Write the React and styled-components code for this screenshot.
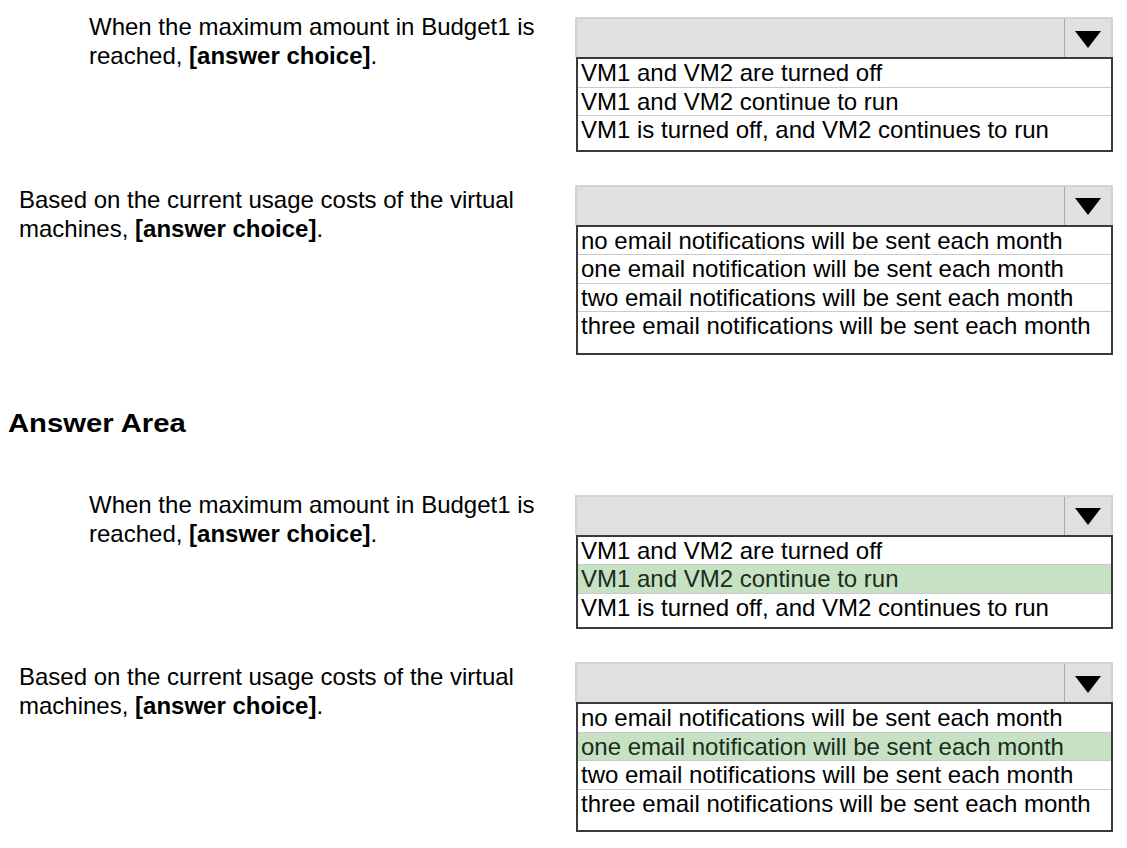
import styled, { createGlobalStyle } from "styled-components";

const GlobalStyle = createGlobalStyle`
  html, body {
    margin: 0;
    padding: 0;
    background: #fff;
  }
  body {
    font-family: "Liberation Sans", Arial, sans-serif;
    color: #000;
    overflow: hidden;
  }
`;

const questions = [
  {
    text: "When the maximum amount in Budget1 is reached, ",
    indent: 89,
    offset: 5,
    extra: 5,
    options: [
      "VM1 and VM2 are turned off",
      "VM1 and VM2 continue to run",
      "VM1 is turned off, and VM2 continues to run",
    ],
  },
  {
    text: "Based on the current usage costs of the virtual machines, ",
    indent: 19,
    offset: 0,
    extra: 12,
    options: [
      "no email notifications will be sent each month",
      "one email notification will be sent each month",
      "two email notifications will be sent each month",
      "three email notifications will be sent each month",
    ],
  },
];

const answers = [1, 1];

export default function App() {
  return (
    <Page>
      <GlobalStyle />
      <Section>
        {questions.map((q, i) => (
          <Question key={i} q={q} />
        ))}
      </Section>
      <Heading>Answer Area</Heading>
      <Section $answer>
        {questions.map((q, i) => (
          <Question key={i} q={q} selected={answers[i]} />
        ))}
      </Section>
    </Page>
  );
}

function Question({ q, selected }) {
  return (
    <Row>
      <Prompt $indent={q.indent}>
        {q.text}
        <b>[answer choice]</b>.
      </Prompt>
      <Dropdown $offset={q.offset}>
        <Header>
          <HeaderField />
          <ArrowCell>
            <svg width="26" height="17" viewBox="0 0 26 17">
              <polygon points="0,0 26,0 13,17" fill="#000" />
            </svg>
          </ArrowCell>
        </Header>
        <List $extra={q.extra}>
          {q.options.map((o, j) => (
            <Option key={j} $picked={selected === j}>
              {o}
            </Option>
          ))}
        </List>
      </Dropdown>
    </Row>
  );
}

const Page = styled.div`
  width: 1127px;
  padding-top: 12px;
  box-sizing: border-box;
  display: flex;
  flex-direction: column;
  align-items: flex-start;
`;

const Section = styled.div`
  display: flex;
  flex-direction: column;
  gap: 33px;
  margin-top: ${(p) => (p.$answer ? "52px" : "0")};
`;

const Row = styled.div`
  display: grid;
  grid-template-columns: 575px 538px;
  align-items: start;
`;

const Prompt = styled.div`
  padding-left: ${(p) => p.$indent}px;
  font-size: 24px;
  line-height: 29px;
  b {
    font-weight: bold;
  }
`;

const Dropdown = styled.div`
  margin-top: ${(p) => p.$offset}px;
  display: flex;
  flex-direction: column;
`;

const Header = styled.div`
  height: 40px;
  box-sizing: border-box;
  display: flex;
  background: #e0e0e0;
  border: 2px solid #d2d2d2;
  border-bottom: none;
`;

const HeaderField = styled.div`
  flex: 1;
`;

const ArrowCell = styled.div`
  width: 46px;
  border-left: 1px solid #a9a9a9;
  display: flex;
  align-items: center;
  justify-content: center;
  padding-top: 2px;
`;

const List = styled.div`
  margin-left: 1px;
  border: 2px solid #3a3a3a;
  padding-bottom: ${(p) => p.$extra}px;
  display: flex;
  flex-direction: column;
`;

const Option = styled.div`
  height: 28.5px;
  box-sizing: border-box;
  padding-left: 3px;
  font-size: 24px;
  line-height: 28px;
  white-space: nowrap;
  border-bottom: 1px solid #cacaca;
  background: ${(p) => (p.$picked ? "#c6e1c4" : "transparent")};
  color: ${(p) => (p.$picked ? "#1a2c1a" : "#000")};
  &:last-child {
    border-bottom: ${(p) => (p.$picked ? "1px solid #cacaca" : "none")};
  }
`;

const Heading = styled.div`
  margin-top: 53px;
  margin-left: 8px;
  font-size: 25px;
  line-height: 30px;
  font-weight: bold;
  transform: scaleX(1.17);
  transform-origin: left center;
`;
